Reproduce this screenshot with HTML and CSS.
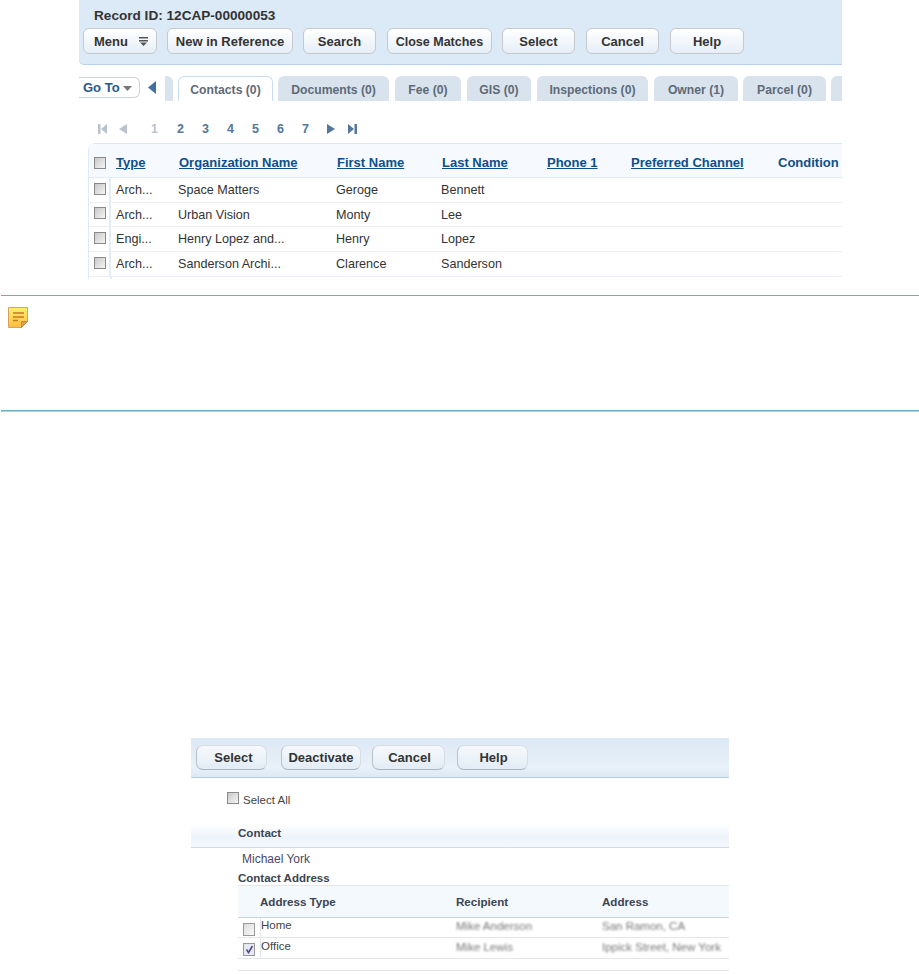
FILE: index.html
```html
<!DOCTYPE html>
<html lang="en">
<head>
<meta charset="utf-8">
<title>Record matches</title>
<link rel="stylesheet" href="styles.css">
</head>
<body>
<main class="top">
  <header class="record-panel">
    <h1 class="record-id">Record ID: 12CAP-00000053</h1>
    <div class="toolbar">
      <button class="btn btn-menu">Menu <svg class="menu-icon" width="9" height="9" viewBox="0 0 9 9"><path d="M0 0h9v1.500H0zM0 3h9v1.500H0zM1 5.500h7L4.500 9z" fill="#555"/></svg></button>
      <button class="btn btn-new">New in Reference</button>
      <button class="btn btn-search">Search</button>
      <button class="btn btn-close">Close Matches</button>
      <button class="btn btn-select">Select</button>
      <button class="btn btn-cancel">Cancel</button>
      <button class="btn btn-help">Help</button>
    </div>
  </header>
  <nav class="tabbar">
    <span class="goto">Go To <svg width="9" height="5" viewBox="0 0 9 5"><path d="M0 0h9L4.500 5z" fill="#777"/></svg></span>
    <svg class="tab-prev" width="8" height="13" viewBox="0 0 8 13"><path d="M8 0v13L0 6.500z" fill="#3f6f9f"/></svg>
    <span class="tab tab-stub"></span>
    <span class="tab tab-active t-contacts">Contacts (0)</span>
    <span class="tab t-documents">Documents (0)</span>
    <span class="tab t-fee">Fee (0)</span>
    <span class="tab t-gis">GIS (0)</span>
    <span class="tab t-inspections">Inspections (0)</span>
    <span class="tab t-owner">Owner (1)</span>
    <span class="tab t-parcel">Parcel (0)</span>
    <span class="tab t-next"></span>
  </nav>
  <div class="pager">
    <svg class="pg-first" width="9" height="10" viewBox="0 0 9 10"><path d="M0 0h2.500v10H0zM9 0v10L3 5z" fill="#b9c2cb"/></svg>
    <svg class="pg-prev" width="8" height="10" viewBox="0 0 8 10"><path d="M8 0v10L0 5z" fill="#b9c2cb"/></svg>
    <span class="pg-cur">1</span>
    <span class="pg-num">2</span><span class="pg-num">3</span><span class="pg-num">4</span><span class="pg-num">5</span><span class="pg-num">6</span><span class="pg-num">7</span>
    <svg class="pg-next" width="8" height="10" viewBox="0 0 8 10"><path d="M0 0v10l8-5z" fill="#54769a"/></svg>
    <svg class="pg-last" width="9" height="10" viewBox="0 0 9 10"><path d="M0 0v10l6-5zM6.500 0H9v10H6.500z" fill="#54769a"/></svg>
  </div>
  <div class="grid">
    <div class="row row-head">
      <span class="cb-cell"><span class="cb"></span></span>
      <a class="c1">Type</a><a class="c2">Organization Name</a><a class="c3">First Name</a><a class="c4">Last Name</a><a class="c5">Phone 1</a><a class="c6">Preferred Channel</a><b class="c7">Condition</b>
    </div>
    <div class="row"><span class="cb-cell"><span class="cb"></span></span><span class="c1">Arch...</span><span class="c2">Space Matters</span><span class="c3">Geroge</span><span class="c4">Bennett</span></div>
    <div class="row"><span class="cb-cell"><span class="cb"></span></span><span class="c1">Arch...</span><span class="c2">Urban Vision</span><span class="c3">Monty</span><span class="c4">Lee</span></div>
    <div class="row"><span class="cb-cell"><span class="cb"></span></span><span class="c1">Engi...</span><span class="c2">Henry Lopez and...</span><span class="c3">Henry</span><span class="c4">Lopez</span></div>
    <div class="row"><span class="cb-cell"><span class="cb"></span></span><span class="c1">Arch...</span><span class="c2">Sanderson Archi...</span><span class="c3">Clarence</span><span class="c4">Sanderson</span></div>
    <div class="grid-foot"></div>
  </div>
</main>
<aside class="note">
  <svg width="20" height="21" viewBox="0 0 20 21">
    <defs><linearGradient id="noteFill" x1="0" y1="0" x2="0" y2="1"><stop offset="0" stop-color="#fff06a"/><stop offset="1" stop-color="#fdbd3c"/></linearGradient></defs>
    <path d="M.5.500h19v14l-6 6H.5z" fill="url(#noteFill)" stroke="#d9a05a"/>
    <path d="M13.500 20.500v-6h6z" fill="#d8a058" stroke="#c98a40"/>
    <path d="M5 6h11M5 10h11M5 13.500h5" stroke="#c9762a" stroke-width="1.500"/>
  </svg>
</aside>
<section class="dialog">
  <div class="dlg-toolbar">
    <button class="dlg-btn d-select">Select</button>
    <button class="dlg-btn d-deact">Deactivate</button>
    <button class="dlg-btn d-cancel">Cancel</button>
    <button class="dlg-btn d-help">Help</button>
  </div>
  <label class="select-all"><span class="cb"></span>Select All</label>
  <div class="contact-head">Contact</div>
  <div class="contact-name">Michael York</div>
  <div class="addr-title">Contact Address</div>
  <div class="addr">
    <div class="addr-row addr-head"><span></span><b>Address Type</b><b>Recipient</b><b>Address</b></div>
    <div class="addr-row"><span class="cb cb-low"></span><span class="at">Home</span><span class="blur">Mike Anderson</span><span class="blur">San Ramon, CA</span></div>
    <div class="addr-row"><span class="cb cb-low cb-on"><svg width="9" height="9" viewBox="0 0 9 9"><path d="M1.500 4.500l2 3 4-6.500" fill="none" stroke="#4b4a80" stroke-width="1.500"/></svg></span><span class="at">Office</span><span class="blur">Mike Lewis</span><span class="blur">Ippick Street, New York</span></div>
    <div class="addr-foot"></div>
  </div>
</section>
</body>
</html>
```
FILE: styles.css
```css
* { box-sizing: border-box; }
html, body { margin: 0; padding: 0; background: #fff; }
body { font-family: "Liberation Sans", Arial, sans-serif; color: #333; width: 919px; height: 974px; overflow: hidden; }

.top { margin-left: 79px; width: 763px; height: 295px; overflow: hidden; }

.record-panel { height: 65px; background: #dce9f6; border-bottom: 1px solid #b5d3ee; border-bottom-left-radius: 5px; padding-left: 4px; }
.record-id { margin: 0; padding: 8px 0 0 11px; height: 28px; font-size: 13.600px; line-height: 15px; font-weight: 700; color: #333; }
.toolbar { display: flex; }
.btn { height: 26px; padding: 2px 0 0; border: 1px solid #c6c9cc; border-radius: 6px; background: linear-gradient(#fff, #e6eef7); font: 700 13px/20px "Liberation Sans", Arial, sans-serif; color: #333; white-space: nowrap; }
.btn-menu { width: 74px; margin-right: 10px; text-align: left; padding-left: 10px; }
.menu-icon { margin-left: 7px; }
.btn-new { width: 126px; margin-right: 10px; }
.btn-search { width: 73px; margin-right: 11px; }
.btn-close { width: 105px; margin-right: 10px; font-size: 12.500px; }
.btn-select { width: 73px; margin-right: 11px; }
.btn-cancel { width: 73px; margin-right: 11px; }
.btn-help { width: 74px; }

.tabbar { display: flex; align-items: flex-start; height: 37px; padding-top: 11px; }
.goto { width: 61px; height: 21px; margin-top: 1px; border: 1px solid #ccd3da; border-left: 0; border-radius: 0 6px 6px 0; background: #fff; padding-left: 4px; font-size: 13px; font-weight: 700; line-height: 19px; color: #25598f; white-space: nowrap; }
.goto svg { vertical-align: 1px; }
.tab-prev { margin: 5px 0 0 8px; }
.tab { height: 25px; margin-left: 5px; border-radius: 6px 6px 0 0; background: #d8e3ee; text-align: center; font-size: 12.200px; font-weight: 700; line-height: 28px; color: #5f6a77; white-space: nowrap; }
.tab-stub { width: 8px; margin-left: 9px; border-radius: 0 6px 0 0; }
.tab-active { background: #fff; border: 1px solid #c8def2; border-bottom: 0; line-height: 26px; }
.t-contacts { width: 95px; }
.t-documents { width: 111px; }
.t-fee { width: 66px; margin-left: 6px; }
.t-gis { width: 64px; margin-left: 6px; }
.t-inspections { width: 111px; margin-left: 6px; }
.t-owner { width: 84px; margin-left: 6px; }
.t-parcel { width: 83px; }
.t-next { flex: 1; border-radius: 6px 0 0 0; }

.pager { display: flex; align-items: center; height: 42px; padding: 13px 0 0 19px; font-size: 12.500px; font-weight: 700; color: #54769a; margin-top: -1px; }
.pg-first { margin-right: 12px; }
.pg-cur { margin-left: 24px; width: 26px; color: #b9c2cb; }
.pg-num { width: 25px; }
.pg-next { margin-right: 13px; }

.grid { margin-left: 9px; border-left: 1px solid #dce9f6; border-top: 1px solid #dce6f2; border-top-left-radius: 8px; }
.row { display: grid; grid-template-columns: 22px 62px 163px 105px 106px 84px 147px 70px; height: 25px; align-items: center; border-bottom: 1px solid #ebf0f6; font-size: 12.600px; color: #333; }
.row:nth-child(3) { height: 24px; }
.row:nth-child(3) .cb-cell { padding-top: 4px; }
.row-head { height: 34px; background: #f6fafe; border-bottom: 1px solid #e3ebf5; font-size: 13px; font-weight: 700; color: #0d4f8c; }
.row-head a { text-decoration: underline; color: #0d4f8c; padding-top: 3px; }
.row-head b { color: #0d4f8c; padding-top: 3px; }
.row-head .c1 { padding-left: 5px; }
.row-head .c2 { padding-left: 6px; }
.row-head .c3, .row-head .c4 { padding-left: 1px; }
.cb-cell { display: flex; height: 100%; padding: 5px 0 0 5px; border-right: 2px solid #e2edf8; }
.row-head .cb-cell { border-right: 0; padding-top: 13px; }
.c1 { padding-left: 5px; }
.c2 { padding-left: 5px; }
.cb { display: inline-block; flex: none; width: 12px; height: 12px; border: 1px solid #8a8a8a; background: linear-gradient(135deg, #c9c9c9, #f4f4f4); }
.grid-foot { height: 2px; width: 23px; border-right: 2px solid #e2edf8; }

.note { height: 116px; margin-left: 1px; border-top: 1px solid #6eaec4; border-bottom: 1px solid #6eaec4; box-shadow: 0 1px #b0d3e2; padding: 11px 0 0 7px; }
.note svg { display: block; }

.dialog { width: 538px; margin: 327px 0 0 191px; overflow: hidden; }
.dlg-toolbar { display: flex; height: 40px; padding: 7px 0 0 5px; background: linear-gradient(#dbe8f5, #e9f1f9 75%, #dce8f3); border-bottom: 1px solid #b7cde0; }
.dlg-btn { height: 25px; padding: 1px 0 0; border: 1px solid #d6dde4; border-left-color: #b9c0c8; border-bottom-color: #a8b4c0; border-radius: 7px; background: linear-gradient(#f6f9fc, #e2ecf6); font: 700 13px/22px "Liberation Sans", Arial, sans-serif; color: #333; }
.d-select { width: 71px; margin-right: 14px; padding-left: 4px; }
.d-deact { width: 80px; margin-right: 11px; }
.d-cancel { width: 73px; margin-right: 12px; padding-left: 2px; }
.d-help { width: 71px; padding-left: 2px; }

.select-all { display: flex; height: 45px; align-items: flex-start; padding: 14px 0 0 36px; font-size: 11.500px; line-height: 17px; color: #444; }
.select-all .cb { margin: 0 4px 0 0; }
.contact-head { height: 25px; padding-left: 47px; background: linear-gradient(#fff, #edf4fb 60%, #f4f8fc); border-bottom: 1px solid #d5dadf; font-size: 11.600px; font-weight: 700; line-height: 19px; color: #3b4450; }
.contact-name { height: 21px; padding: 4px 0 0 51px; font-size: 12px; line-height: 15px; color: #4a4668; }
.addr-title { height: 16px; padding: 2px 0 0 47px; font-size: 11.500px; font-weight: 700; line-height: 15px; color: #3b4450; }
.addr { margin-left: 47px; }
.addr-row { display: grid; grid-template-columns: 22px 196px 146px 1fr; height: 21px; border-bottom: 1px solid #e3e7ea; align-items: center; font-size: 12px; }
.addr-row:nth-child(2) { height: 20px; }
.addr-row:nth-child(3) .at { line-height: 17px; }
.addr-head { height: 33px; background: #f4f9fd; border-top: 1px solid #e3e7ea; border-bottom-color: #ccd4da; font-weight: 700; font-size: 11.600px; color: #3b4450; }
.addr-row .at { font-size: 11.500px; color: #444; border-left: 1px solid #e3e7ea; height: 100%; line-height: 15px; }
.cb-low { margin: 3px 0 0 5px; height: 13px; border-color: #999; background: linear-gradient(135deg, #dcdcdc, #fafafa); }
.cb-on { display: flex; align-items: center; justify-content: center; background: #e6e8f4; }
.blur { filter: blur(1.200px); font-size: 11.500px; color: #777; padding-bottom: 3px; }
.addr-foot { height: 12px; border-bottom: 1px solid #e3e7ea; }
```
